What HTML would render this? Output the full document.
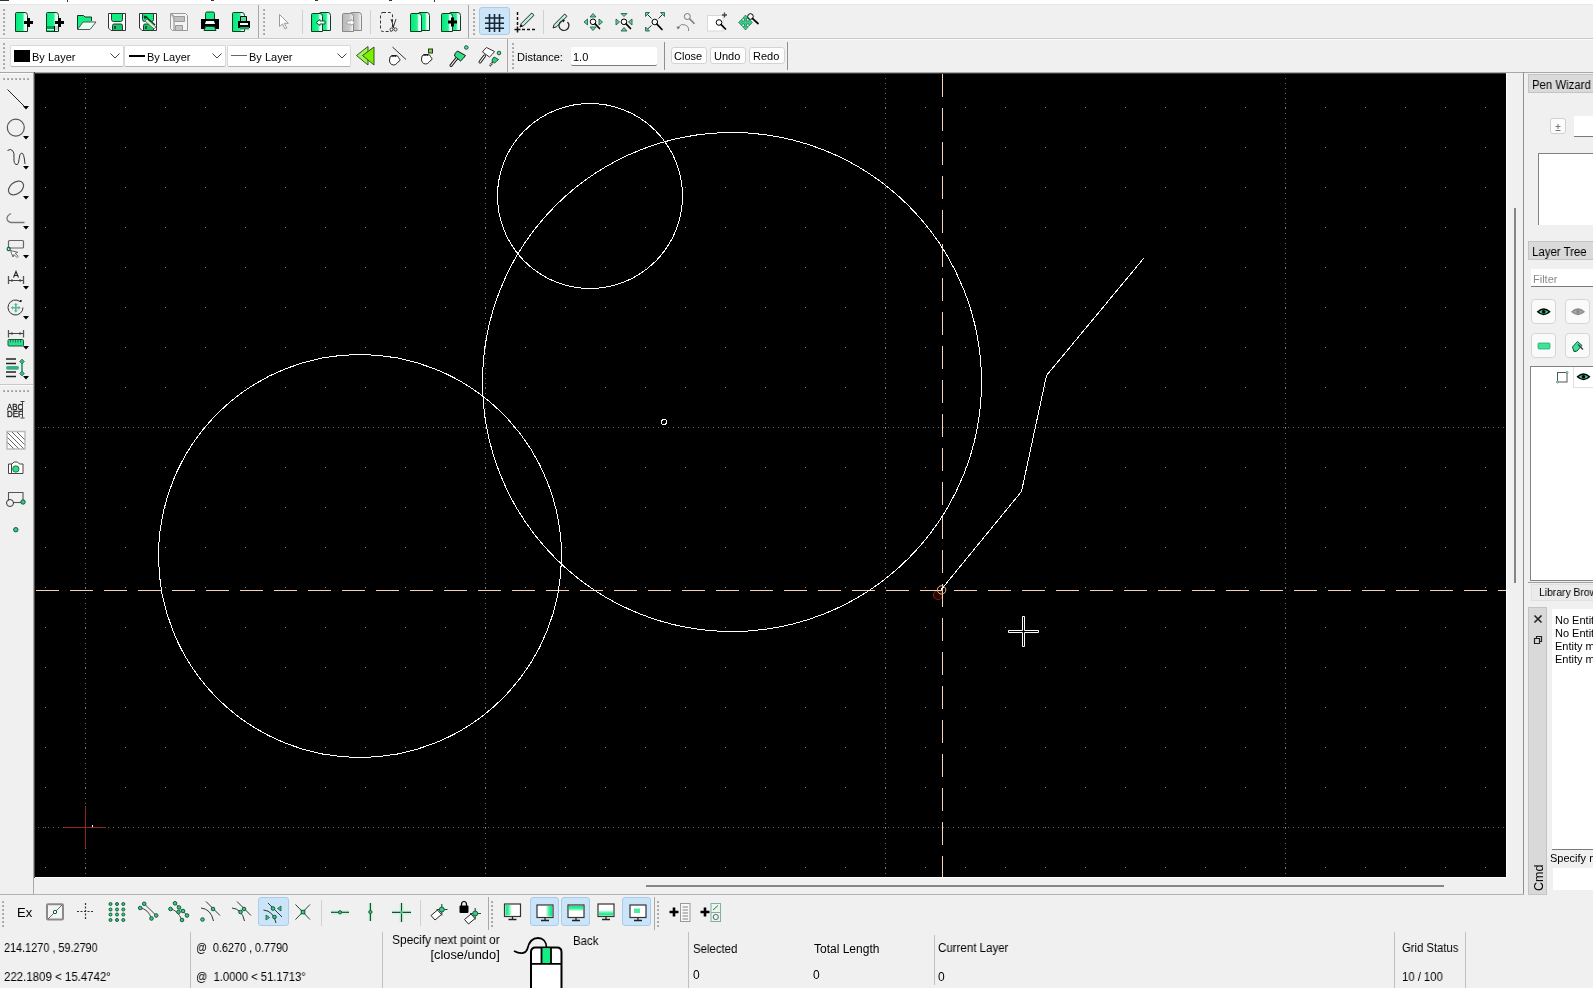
<!DOCTYPE html>
<html><head><meta charset="utf-8">
<style>
html,body{margin:0;padding:0;width:1593px;height:988px;overflow:hidden;background:#f0f0f0;font-family:"Liberation Sans",sans-serif;font-size:12px;color:#000}
.a{position:absolute}
.t{position:absolute;white-space:nowrap;-webkit-font-smoothing:antialiased;will-change:transform}
.sv{position:absolute;left:0;top:0;overflow:visible}
</style></head><body>
<div class="a" style="left:0px;top:0px;width:1593px;height:5px;background:#ffffff;"></div>
<div class="a" style="left:0px;top:4px;width:1593px;height:1px;background:#e6e6e6;"></div>
<div class="a" style="left:0px;top:0px;width:9px;height:1px;background:#333;"></div>
<div class="a" style="left:67px;top:0px;width:1px;height:2px;background:#333;"></div>
<div class="a" style="left:211px;top:0px;width:3px;height:1px;background:#333;"></div>
<div class="a" style="left:315px;top:0px;width:3px;height:1px;background:#333;"></div>
<div class="a" style="left:389px;top:0px;width:3px;height:1px;background:#333;"></div>
<div class="a" style="left:434px;top:0px;width:1px;height:2px;background:#333;"></div>
<div class="a" style="left:0px;top:38px;width:1593px;height:1px;background:#c9c9c9;"></div>
<div class="a" style="left:0px;top:39px;width:1593px;height:1px;background:#fbfbfb;"></div>
<div class="a" style="left:3px;top:9px;width:2px;height:2px;background:#b2b2b2;"></div>
<div class="a" style="left:4px;top:10px;width:1px;height:1px;background:#9a9a9a;"></div>
<div class="a" style="left:3px;top:13px;width:2px;height:2px;background:#b2b2b2;"></div>
<div class="a" style="left:4px;top:14px;width:1px;height:1px;background:#9a9a9a;"></div>
<div class="a" style="left:3px;top:17px;width:2px;height:2px;background:#b2b2b2;"></div>
<div class="a" style="left:4px;top:18px;width:1px;height:1px;background:#9a9a9a;"></div>
<div class="a" style="left:3px;top:21px;width:2px;height:2px;background:#b2b2b2;"></div>
<div class="a" style="left:4px;top:22px;width:1px;height:1px;background:#9a9a9a;"></div>
<div class="a" style="left:3px;top:25px;width:2px;height:2px;background:#b2b2b2;"></div>
<div class="a" style="left:4px;top:26px;width:1px;height:1px;background:#9a9a9a;"></div>
<div class="a" style="left:3px;top:29px;width:2px;height:2px;background:#b2b2b2;"></div>
<div class="a" style="left:4px;top:30px;width:1px;height:1px;background:#9a9a9a;"></div>
<div class="a" style="left:3px;top:33px;width:2px;height:2px;background:#b2b2b2;"></div>
<div class="a" style="left:4px;top:34px;width:1px;height:1px;background:#9a9a9a;"></div>
<div class="a" style="left:263px;top:9px;width:2px;height:2px;background:#b2b2b2;"></div>
<div class="a" style="left:264px;top:10px;width:1px;height:1px;background:#9a9a9a;"></div>
<div class="a" style="left:263px;top:13px;width:2px;height:2px;background:#b2b2b2;"></div>
<div class="a" style="left:264px;top:14px;width:1px;height:1px;background:#9a9a9a;"></div>
<div class="a" style="left:263px;top:17px;width:2px;height:2px;background:#b2b2b2;"></div>
<div class="a" style="left:264px;top:18px;width:1px;height:1px;background:#9a9a9a;"></div>
<div class="a" style="left:263px;top:21px;width:2px;height:2px;background:#b2b2b2;"></div>
<div class="a" style="left:264px;top:22px;width:1px;height:1px;background:#9a9a9a;"></div>
<div class="a" style="left:263px;top:25px;width:2px;height:2px;background:#b2b2b2;"></div>
<div class="a" style="left:264px;top:26px;width:1px;height:1px;background:#9a9a9a;"></div>
<div class="a" style="left:263px;top:29px;width:2px;height:2px;background:#b2b2b2;"></div>
<div class="a" style="left:264px;top:30px;width:1px;height:1px;background:#9a9a9a;"></div>
<div class="a" style="left:263px;top:33px;width:2px;height:2px;background:#b2b2b2;"></div>
<div class="a" style="left:264px;top:34px;width:1px;height:1px;background:#9a9a9a;"></div>
<div class="a" style="left:473px;top:9px;width:2px;height:2px;background:#b2b2b2;"></div>
<div class="a" style="left:474px;top:10px;width:1px;height:1px;background:#9a9a9a;"></div>
<div class="a" style="left:473px;top:13px;width:2px;height:2px;background:#b2b2b2;"></div>
<div class="a" style="left:474px;top:14px;width:1px;height:1px;background:#9a9a9a;"></div>
<div class="a" style="left:473px;top:17px;width:2px;height:2px;background:#b2b2b2;"></div>
<div class="a" style="left:474px;top:18px;width:1px;height:1px;background:#9a9a9a;"></div>
<div class="a" style="left:473px;top:21px;width:2px;height:2px;background:#b2b2b2;"></div>
<div class="a" style="left:474px;top:22px;width:1px;height:1px;background:#9a9a9a;"></div>
<div class="a" style="left:473px;top:25px;width:2px;height:2px;background:#b2b2b2;"></div>
<div class="a" style="left:474px;top:26px;width:1px;height:1px;background:#9a9a9a;"></div>
<div class="a" style="left:473px;top:29px;width:2px;height:2px;background:#b2b2b2;"></div>
<div class="a" style="left:474px;top:30px;width:1px;height:1px;background:#9a9a9a;"></div>
<div class="a" style="left:473px;top:33px;width:2px;height:2px;background:#b2b2b2;"></div>
<div class="a" style="left:474px;top:34px;width:1px;height:1px;background:#9a9a9a;"></div>
<div class="a" style="left:258px;top:5px;width:1px;height:33px;background:#a8a8a8;"></div>
<div class="a" style="left:468px;top:5px;width:1px;height:33px;background:#a8a8a8;"></div>
<div class="a" style="left:302px;top:10px;width:1px;height:24px;background:#d0d0d0;"></div>
<div class="a" style="left:370px;top:10px;width:1px;height:24px;background:#d0d0d0;"></div>
<div class="a" style="left:543px;top:10px;width:1px;height:24px;background:#d0d0d0;"></div>
<div class="a" style="left:479px;top:7px;width:29px;height:26px;background:#cce4f7;border:1px solid #a6cdee;border-radius:3px"></div>
<div class="a" style="left:3px;top:43px;width:2px;height:2px;background:#b2b2b2;"></div>
<div class="a" style="left:4px;top:44px;width:1px;height:1px;background:#9a9a9a;"></div>
<div class="a" style="left:3px;top:47px;width:2px;height:2px;background:#b2b2b2;"></div>
<div class="a" style="left:4px;top:48px;width:1px;height:1px;background:#9a9a9a;"></div>
<div class="a" style="left:3px;top:51px;width:2px;height:2px;background:#b2b2b2;"></div>
<div class="a" style="left:4px;top:52px;width:1px;height:1px;background:#9a9a9a;"></div>
<div class="a" style="left:3px;top:55px;width:2px;height:2px;background:#b2b2b2;"></div>
<div class="a" style="left:4px;top:56px;width:1px;height:1px;background:#9a9a9a;"></div>
<div class="a" style="left:3px;top:59px;width:2px;height:2px;background:#b2b2b2;"></div>
<div class="a" style="left:4px;top:60px;width:1px;height:1px;background:#9a9a9a;"></div>
<div class="a" style="left:3px;top:63px;width:2px;height:2px;background:#b2b2b2;"></div>
<div class="a" style="left:4px;top:64px;width:1px;height:1px;background:#9a9a9a;"></div>
<div class="a" style="left:3px;top:67px;width:2px;height:2px;background:#b2b2b2;"></div>
<div class="a" style="left:4px;top:68px;width:1px;height:1px;background:#9a9a9a;"></div>
<div class="a" style="left:512px;top:43px;width:2px;height:2px;background:#b2b2b2;"></div>
<div class="a" style="left:513px;top:44px;width:1px;height:1px;background:#9a9a9a;"></div>
<div class="a" style="left:512px;top:47px;width:2px;height:2px;background:#b2b2b2;"></div>
<div class="a" style="left:513px;top:48px;width:1px;height:1px;background:#9a9a9a;"></div>
<div class="a" style="left:512px;top:51px;width:2px;height:2px;background:#b2b2b2;"></div>
<div class="a" style="left:513px;top:52px;width:1px;height:1px;background:#9a9a9a;"></div>
<div class="a" style="left:512px;top:55px;width:2px;height:2px;background:#b2b2b2;"></div>
<div class="a" style="left:513px;top:56px;width:1px;height:1px;background:#9a9a9a;"></div>
<div class="a" style="left:512px;top:59px;width:2px;height:2px;background:#b2b2b2;"></div>
<div class="a" style="left:513px;top:60px;width:1px;height:1px;background:#9a9a9a;"></div>
<div class="a" style="left:512px;top:63px;width:2px;height:2px;background:#b2b2b2;"></div>
<div class="a" style="left:513px;top:64px;width:1px;height:1px;background:#9a9a9a;"></div>
<div class="a" style="left:512px;top:67px;width:2px;height:2px;background:#b2b2b2;"></div>
<div class="a" style="left:513px;top:68px;width:1px;height:1px;background:#9a9a9a;"></div>
<div class="a" style="left:507px;top:39px;width:1px;height:33px;background:#a8a8a8;"></div>
<div class="a" style="left:10px;top:45px;width:112px;height:20px;background:#fff;border:1px solid #d9d9d9;border-bottom-color:#b4b4b4;border-radius:2px"></div>
<div class="a" style="left:124px;top:45px;width:100px;height:20px;background:#fff;border:1px solid #d9d9d9;border-bottom-color:#b4b4b4;border-radius:2px"></div>
<div class="a" style="left:227px;top:45px;width:122px;height:20px;background:#fff;border:1px solid #d9d9d9;border-bottom-color:#b4b4b4;border-radius:2px"></div>
<svg class="a" style="left:110px;top:53px" width="10" height="6"><polyline points="0.5,0.5 5,5 9.5,0.5" fill="none" stroke="#444" stroke-width="1"/></svg>
<svg class="a" style="left:212px;top:53px" width="10" height="6"><polyline points="0.5,0.5 5,5 9.5,0.5" fill="none" stroke="#444" stroke-width="1"/></svg>
<svg class="a" style="left:337px;top:53px" width="10" height="6"><polyline points="0.5,0.5 5,5 9.5,0.5" fill="none" stroke="#444" stroke-width="1"/></svg>
<div class="a" style="left:14px;top:50px;width:16px;height:12px;background:#000;"></div>
<div class="a" style="left:129px;top:55px;width:16px;height:2px;background:#000;"></div>
<div class="a" style="left:231px;top:55px;width:16px;height:1px;background:#666;"></div>
<div class="a" style="left:571px;top:47px;width:86px;height:18px;background:#fff;border-bottom:1px solid #7a7a7a;border-radius:2px"></div>
<div class="a" style="left:664px;top:42px;width:1px;height:28px;background:#909090;"></div>
<div class="a" style="left:787px;top:42px;width:1px;height:28px;background:#909090;"></div>
<div class="a" style="left:671px;top:47px;width:34px;height:15px;background:#fdfdfd;border:1px solid #d4d4d4;border-radius:3px"></div>
<div class="a" style="left:710px;top:47px;width:34px;height:15px;background:#fdfdfd;border:1px solid #d4d4d4;border-radius:3px"></div>
<div class="a" style="left:749px;top:47px;width:34px;height:15px;background:#fdfdfd;border:1px solid #d4d4d4;border-radius:3px"></div>
<div class="a" style="left:0px;top:72px;width:1593px;height:1px;background:#a8a8a8;"></div>
<div class="a" style="left:0px;top:73px;width:33px;height:1px;background:#fbfbfb;"></div>
<div class="a" style="left:33px;top:72px;width:1px;height:822px;background:#a8a8a8;"></div>
<div class="a" style="left:34px;top:72px;width:1px;height:806px;background:#4a4a4a;"></div>
<div class="a" style="left:0px;top:894px;width:1524px;height:1px;background:#b4b4b4;"></div>
<div class="a" style="left:1523px;top:72px;width:1px;height:822px;background:#a0a0a0;"></div>
<div class="a" style="left:35px;top:877px;width:1472px;height:1px;background:#ffffff;"></div>
<div class="a" style="left:1506px;top:73px;width:1px;height:805px;background:#ffffff;"></div>
<div class="a" style="left:3px;top:78px;width:2px;height:2px;background:#b2b2b2;"></div>
<div class="a" style="left:4px;top:79px;width:1px;height:1px;background:#9a9a9a;"></div>
<div class="a" style="left:7px;top:78px;width:2px;height:2px;background:#b2b2b2;"></div>
<div class="a" style="left:8px;top:79px;width:1px;height:1px;background:#9a9a9a;"></div>
<div class="a" style="left:11px;top:78px;width:2px;height:2px;background:#b2b2b2;"></div>
<div class="a" style="left:12px;top:79px;width:1px;height:1px;background:#9a9a9a;"></div>
<div class="a" style="left:15px;top:78px;width:2px;height:2px;background:#b2b2b2;"></div>
<div class="a" style="left:16px;top:79px;width:1px;height:1px;background:#9a9a9a;"></div>
<div class="a" style="left:19px;top:78px;width:2px;height:2px;background:#b2b2b2;"></div>
<div class="a" style="left:20px;top:79px;width:1px;height:1px;background:#9a9a9a;"></div>
<div class="a" style="left:23px;top:78px;width:2px;height:2px;background:#b2b2b2;"></div>
<div class="a" style="left:24px;top:79px;width:1px;height:1px;background:#9a9a9a;"></div>
<div class="a" style="left:27px;top:78px;width:2px;height:2px;background:#b2b2b2;"></div>
<div class="a" style="left:28px;top:79px;width:1px;height:1px;background:#9a9a9a;"></div>
<div class="a" style="left:0px;top:384px;width:33px;height:1px;background:#c8c8c8;"></div>
<div class="a" style="left:0px;top:385px;width:33px;height:1px;background:#fafafa;"></div>
<div class="a" style="left:3px;top:390px;width:2px;height:2px;background:#b2b2b2;"></div>
<div class="a" style="left:4px;top:391px;width:1px;height:1px;background:#9a9a9a;"></div>
<div class="a" style="left:7px;top:390px;width:2px;height:2px;background:#b2b2b2;"></div>
<div class="a" style="left:8px;top:391px;width:1px;height:1px;background:#9a9a9a;"></div>
<div class="a" style="left:11px;top:390px;width:2px;height:2px;background:#b2b2b2;"></div>
<div class="a" style="left:12px;top:391px;width:1px;height:1px;background:#9a9a9a;"></div>
<div class="a" style="left:15px;top:390px;width:2px;height:2px;background:#b2b2b2;"></div>
<div class="a" style="left:16px;top:391px;width:1px;height:1px;background:#9a9a9a;"></div>
<div class="a" style="left:19px;top:390px;width:2px;height:2px;background:#b2b2b2;"></div>
<div class="a" style="left:20px;top:391px;width:1px;height:1px;background:#9a9a9a;"></div>
<div class="a" style="left:23px;top:390px;width:2px;height:2px;background:#b2b2b2;"></div>
<div class="a" style="left:24px;top:391px;width:1px;height:1px;background:#9a9a9a;"></div>
<div class="a" style="left:27px;top:390px;width:2px;height:2px;background:#b2b2b2;"></div>
<div class="a" style="left:28px;top:391px;width:1px;height:1px;background:#9a9a9a;"></div>
<div class="a" style="left:646px;top:885px;width:798px;height:2px;background:#868686;"></div>
<div class="a" style="left:1514px;top:208px;width:2px;height:375px;background:#868686;"></div>
<div class="a" style="left:2px;top:901px;width:2px;height:2px;background:#b2b2b2;"></div>
<div class="a" style="left:3px;top:902px;width:1px;height:1px;background:#9a9a9a;"></div>
<div class="a" style="left:2px;top:905px;width:2px;height:2px;background:#b2b2b2;"></div>
<div class="a" style="left:3px;top:906px;width:1px;height:1px;background:#9a9a9a;"></div>
<div class="a" style="left:2px;top:909px;width:2px;height:2px;background:#b2b2b2;"></div>
<div class="a" style="left:3px;top:910px;width:1px;height:1px;background:#9a9a9a;"></div>
<div class="a" style="left:2px;top:913px;width:2px;height:2px;background:#b2b2b2;"></div>
<div class="a" style="left:3px;top:914px;width:1px;height:1px;background:#9a9a9a;"></div>
<div class="a" style="left:2px;top:917px;width:2px;height:2px;background:#b2b2b2;"></div>
<div class="a" style="left:3px;top:918px;width:1px;height:1px;background:#9a9a9a;"></div>
<div class="a" style="left:2px;top:921px;width:2px;height:2px;background:#b2b2b2;"></div>
<div class="a" style="left:3px;top:922px;width:1px;height:1px;background:#9a9a9a;"></div>
<div class="a" style="left:2px;top:925px;width:2px;height:2px;background:#b2b2b2;"></div>
<div class="a" style="left:3px;top:926px;width:1px;height:1px;background:#9a9a9a;"></div>
<div class="a" style="left:488px;top:897px;width:1px;height:33px;background:#a8a8a8;"></div>
<div class="a" style="left:491px;top:901px;width:2px;height:2px;background:#b2b2b2;"></div>
<div class="a" style="left:492px;top:902px;width:1px;height:1px;background:#9a9a9a;"></div>
<div class="a" style="left:491px;top:905px;width:2px;height:2px;background:#b2b2b2;"></div>
<div class="a" style="left:492px;top:906px;width:1px;height:1px;background:#9a9a9a;"></div>
<div class="a" style="left:491px;top:909px;width:2px;height:2px;background:#b2b2b2;"></div>
<div class="a" style="left:492px;top:910px;width:1px;height:1px;background:#9a9a9a;"></div>
<div class="a" style="left:491px;top:913px;width:2px;height:2px;background:#b2b2b2;"></div>
<div class="a" style="left:492px;top:914px;width:1px;height:1px;background:#9a9a9a;"></div>
<div class="a" style="left:491px;top:917px;width:2px;height:2px;background:#b2b2b2;"></div>
<div class="a" style="left:492px;top:918px;width:1px;height:1px;background:#9a9a9a;"></div>
<div class="a" style="left:491px;top:921px;width:2px;height:2px;background:#b2b2b2;"></div>
<div class="a" style="left:492px;top:922px;width:1px;height:1px;background:#9a9a9a;"></div>
<div class="a" style="left:491px;top:925px;width:2px;height:2px;background:#b2b2b2;"></div>
<div class="a" style="left:492px;top:926px;width:1px;height:1px;background:#9a9a9a;"></div>
<div class="a" style="left:654px;top:897px;width:1px;height:33px;background:#a8a8a8;"></div>
<div class="a" style="left:657px;top:901px;width:2px;height:2px;background:#b2b2b2;"></div>
<div class="a" style="left:658px;top:902px;width:1px;height:1px;background:#9a9a9a;"></div>
<div class="a" style="left:657px;top:905px;width:2px;height:2px;background:#b2b2b2;"></div>
<div class="a" style="left:658px;top:906px;width:1px;height:1px;background:#9a9a9a;"></div>
<div class="a" style="left:657px;top:909px;width:2px;height:2px;background:#b2b2b2;"></div>
<div class="a" style="left:658px;top:910px;width:1px;height:1px;background:#9a9a9a;"></div>
<div class="a" style="left:657px;top:913px;width:2px;height:2px;background:#b2b2b2;"></div>
<div class="a" style="left:658px;top:914px;width:1px;height:1px;background:#9a9a9a;"></div>
<div class="a" style="left:657px;top:917px;width:2px;height:2px;background:#b2b2b2;"></div>
<div class="a" style="left:658px;top:918px;width:1px;height:1px;background:#9a9a9a;"></div>
<div class="a" style="left:657px;top:921px;width:2px;height:2px;background:#b2b2b2;"></div>
<div class="a" style="left:658px;top:922px;width:1px;height:1px;background:#9a9a9a;"></div>
<div class="a" style="left:657px;top:925px;width:2px;height:2px;background:#b2b2b2;"></div>
<div class="a" style="left:658px;top:926px;width:1px;height:1px;background:#9a9a9a;"></div>
<div class="a" style="left:321px;top:900px;width:1px;height:26px;background:#d0d0d0;"></div>
<div class="a" style="left:420px;top:900px;width:1px;height:26px;background:#d0d0d0;"></div>
<div class="a" style="left:258px;top:897px;width:29px;height:27px;background:#cce4f7;border:1px solid #a6cdee;border-radius:3px"></div>
<div class="a" style="left:530px;top:897px;width:27px;height:27px;background:#cce4f7;border:1px solid #a6cdee;border-radius:3px"></div>
<div class="a" style="left:561px;top:897px;width:27px;height:27px;background:#cce4f7;border:1px solid #a6cdee;border-radius:3px"></div>
<div class="a" style="left:622px;top:897px;width:27px;height:27px;background:#cce4f7;border:1px solid #a6cdee;border-radius:3px"></div>
<div class="a" style="left:190px;top:932px;width:1px;height:56px;background:#c0c0c0;"></div>
<div class="a" style="left:382px;top:932px;width:1px;height:56px;background:#c0c0c0;"></div>
<div class="a" style="left:688px;top:932px;width:1px;height:56px;background:#c0c0c0;"></div>
<div class="a" style="left:934px;top:935px;width:1px;height:50px;background:#c0c0c0;"></div>
<div class="a" style="left:1394px;top:932px;width:1px;height:56px;background:#c0c0c0;"></div>
<div class="a" style="left:1465px;top:932px;width:1px;height:56px;background:#c0c0c0;"></div>
<div class="a" style="left:1528px;top:74px;width:70px;height:17px;background:#dadada;border:1px solid #c4c4c4"></div>
<div class="a" style="left:1550px;top:118px;width:14px;height:14px;background:#fdfdfd;border:1px solid #d0d0d0;border-radius:3px"></div>
<svg class="a" style="left:1550px;top:118px" width="16" height="16"><path d="M5.5 8.5h5M8 6v5M5.5 12.5h5" stroke="#777" stroke-width="1" fill="none"/></svg>
<div class="a" style="left:1574px;top:116px;width:30px;height:20px;background:#fff;border-bottom:1px solid #7a7a7a"></div>
<div class="a" style="left:1538px;top:153px;width:60px;height:71px;background:#fff;border-left:1px solid #828282;border-top:1px solid #828282"></div>
<div class="a" style="left:1528px;top:241px;width:70px;height:17px;background:#dadada;border:1px solid #c4c4c4"></div>
<div class="a" style="left:1531px;top:269px;width:70px;height:17px;background:#fff;border-bottom:1px solid #7a7a7a"></div>
<div class="a" style="left:1531px;top:299px;width:23px;height:23px;background:#fafafa;border:1px solid #d6d6d6;border-radius:4px"></div>
<div class="a" style="left:1565px;top:299px;width:23px;height:23px;background:#fafafa;border:1px solid #d6d6d6;border-radius:4px"></div>
<div class="a" style="left:1531px;top:333px;width:23px;height:23px;background:#fafafa;border:1px solid #d6d6d6;border-radius:4px"></div>
<div class="a" style="left:1565px;top:333px;width:23px;height:23px;background:#fafafa;border:1px solid #d6d6d6;border-radius:4px"></div>
<div class="a" style="left:1530px;top:366px;width:70px;height:213px;background:#fff;border:1px solid #828282"></div>
<div class="a" style="left:1573px;top:367px;width:30px;height:20px;background:#fff;border-left:1px solid #e0e0e0;border-bottom:1px solid #e0e0e0"></div>
<div class="a" style="left:1528px;top:582px;width:70px;height:1px;background:#a0a0a0;"></div>
<div class="a" style="left:1531px;top:584px;width:70px;height:15px;background:#ebebeb;border:1px solid #e0e0e0"></div>
<div class="a" style="left:1528px;top:607px;width:17px;height:286px;background:#d9d9d9;border:1px solid #c4c4c4"></div>
<svg class="a" style="left:1530px;top:612px" width="16" height="34"><path d="M4.5 3.5l7 7M11.5 3.5l-7 7" stroke="#222" stroke-width="1.6" fill="none"/><path d="M4.5 26.5h5v5h-5zM6.5 26.5v-2h5v5h-2" stroke="#222" stroke-width="1.2" fill="none"/></svg>
<div class="t" style="left:1525.5px;top:871.5px;font-size:12.5px;line-height:12px;transform:rotate(-90deg);transform-origin:center;width:26px;text-align:center">Cmd</div>
<div class="a" style="left:1552px;top:609px;width:50px;height:240px;background:#fff;border-bottom:1px solid #7a7a7a"></div>
<div class="a" style="left:1553px;top:868px;width:50px;height:22px;background:#fff"></div>
<div class="a" style="left:1523px;top:72px;width:1px;height:822px;background:#909090;"></div>
<svg class="sv" width="1593" height="988" viewBox="0 0 1593 988" shape-rendering="crispEdges">
<defs>
<pattern id="gd" x="45" y="107" width="40" height="40" patternUnits="userSpaceOnUse"><rect width="1" height="1" fill="#808080"/></pattern>
<pattern id="vd" x="85" y="73" width="1" height="5" patternUnits="userSpaceOnUse"><rect y="0" width="1" height="1" fill="#6a6a6a"/></pattern>
<pattern id="hd" x="38" y="427" width="5" height="1" patternUnits="userSpaceOnUse"><rect width="1" height="1" fill="#6a6a6a"/></pattern>
<clipPath id="cv"><rect x="35" y="73" width="1471" height="804"/></clipPath>
</defs>
<rect x="35" y="73" width="1471" height="804" fill="#000"/>
<g clip-path="url(#cv)">
<rect x="35" y="73" width="1471" height="804" fill="url(#gd)"/>
<rect x="85" y="73" width="1" height="804" fill="url(#vd)"/>
<rect x="485" y="73" width="1" height="804" fill="url(#vd)"/>
<rect x="885" y="73" width="1" height="804" fill="url(#vd)"/>
<rect x="1285" y="73" width="1" height="804" fill="url(#vd)"/>
<rect x="35" y="427" width="1471" height="1" fill="url(#hd)"/>
<rect x="35" y="827" width="1471" height="1" fill="url(#hd)"/>
<circle cx="938" cy="595" r="4.5" fill="#2a0400" stroke="#70201a" stroke-width="1.2" shape-rendering="auto"/>
<line x1="35" y1="590.5" x2="1506" y2="590.5" stroke="#f2d2b8" stroke-width="1" stroke-dasharray="23 11" stroke-dashoffset="-1"/>
<line x1="942.5" y1="73" x2="942.5" y2="877" stroke="#f2d2b8" stroke-width="1" stroke-dasharray="23 11" stroke-dashoffset="-1"/>
<line x1="64" y1="827.5" x2="106" y2="827.5" stroke="#8c2626" stroke-width="1"/><rect x="92" y="825" width="1" height="2" fill="#fff"/>
<line x1="85.5" y1="806" x2="85.5" y2="848" stroke="#8c2626" stroke-width="1"/>
<g fill="none" stroke="#fff" stroke-width="1">
<circle cx="590" cy="196" r="92.5"/>
<circle cx="732" cy="382" r="249.5"/>
<circle cx="360" cy="556" r="201.5"/>
<circle cx="664" cy="422" r="2.5"/>
<polyline points="940.5,590.5 1021.5,491.5 1046.5,375.5 1143.5,258.5"/>
</g>
<circle cx="941.6" cy="589.9" r="4.2" fill="none" stroke="#f2bc80" stroke-width="1" shape-rendering="auto"/>
<path d="M1022.5 616.5h2v14h14v2h-14v14h-2v-14h-14v-2h14z" fill="#000" stroke="#fff" stroke-width="1" shape-rendering="auto"/>
</g>
<rect id="frtop" x="34" y="73" width="1472" height="1" fill="#3a3a3a"/>
</svg>
<svg class="sv" width="1593" height="988" viewBox="0 0 1593 988">
<defs><linearGradient id="gdoc" x1="0" x2="1" y1="0" y2="0"><stop offset="0" stop-color="#00ec7a"/><stop offset="0.6" stop-color="#20f090"/><stop offset="0.75" stop-color="#d8fff0"/><stop offset="1" stop-color="#ffffff"/></linearGradient><linearGradient id="ggrey" x1="0" x2="1"><stop offset="0" stop-color="#b8b8b8"/><stop offset="0.6" stop-color="#c8c8c8"/><stop offset="1" stop-color="#f8f8f8"/></linearGradient></defs>
<path d="M15.5 31.5V13.5q0-1 1-1H25q2.5 0 2.5 3V31.5z" fill="url(#gdoc)" stroke="#0b3d22" stroke-width="1"/>
<path d="M24 21h9v3h-9zM27 18h3v9h-3z" fill="#000"/>
<path d="M46.5 31.5V13.5q0-1 1-1H56q2.5 0 2.5 3V31.5z" fill="url(#gdoc)" stroke="#0b3d22" stroke-width="1"/>
<path d="M47 26h8v3h-8z" fill="#0aa050"/><path d="M47 29.5h11" stroke="#bff" stroke-width="1"/><path d="M54.5 26v5.5" stroke="#000" stroke-width="1"/><path d="M55 26h3v4h-3z" fill="#ccc"/>
<path d="M55 21h9v3h-9zM58 18h3v9h-3z" fill="#000"/>
<path d="M77.5 29.5V15.5h6l1.5 1.5h6.5v4" fill="#14ee84" stroke="#0b3d22" stroke-width="1"/><path d="M77.5 29.5l5-8h8l-3 8z" fill="#14ee84" stroke="none"/><path d="M77.5 29.5l5.5-7.5h13l-6 7.5z" fill="#e8fff4" stroke="#555" stroke-width="1"/>
<path d="M108.5 13.5h17v17h-14.5l-2.5-2.5z" fill="#fff" stroke="#333" stroke-width="1"/><path d="M111.5 13.5v6q0 2 2 2h7q2 0 2-2v-6z" fill="#10ee80" stroke="#333" stroke-width="1"/><path d="M112.5 30.5v-5q0-1.5 1.5-1.5h7q1.5 0 1.5 1.5v5z" fill="#18c870" stroke="#333" stroke-width="1"/><rect x="114" y="26" width="2" height="3" fill="#085a30"/>
<path d="M139.5 13.5h17v17h-14.5l-2.5-2.5z" fill="#fff" stroke="#333" stroke-width="1"/><path d="M142.5 13.5v6q0 2 2 2h7q2 0 2-2v-6z" fill="#10ee80" stroke="#333" stroke-width="1"/><path d="M143.5 30.5v-5q0-1.5 1.5-1.5h7q1.5 0 1.5 1.5v5z" fill="#18c870" stroke="#333" stroke-width="1"/><rect x="145" y="26" width="2" height="3" fill="#085a30"/>
<path d="M145 16l10 9" stroke="#0b3d22" stroke-width="1.6"/><path d="M147 19l9 8 -2 2 -9-8z" fill="#cfc" stroke="#555" stroke-width=".8"/><path d="M143.5 15.5l4 1-3 3z" fill="#0b3d22"/>
<path d="M170.5 13.5h15l2 2v15h-15l-2-2z" fill="#f4f4f4" stroke="#999" stroke-width="1"/><path d="M172.5 14.5l2 2h10v5h-10z" fill="#c0c0c0" stroke="#999" stroke-width="1"/><path d="M171 14l3 3v13" stroke="#aaa" stroke-width="1.5" fill="none"/><path d="M175.5 30.5v-5h7v5z" fill="#c4c4c4" stroke="#999" stroke-width="1"/>
<path d="M205.5 19.5v-6q0-1.5 1.5-1.5h6q1.5 0 1.5 1.5v6z" fill="#14ee84" stroke="#0b3d22" stroke-width="1"/><path d="M201 19h18v10h-18z" fill="#000"/><path d="M206 21h8l1 3h-10z" fill="#efffff"/><path d="M204 30.5l1.5-4h9l1.5 4z" fill="#30e090" stroke="#0b3d22" stroke-width="1"/>
<path d="M232.5 31.5V13.5q0-1 1-1H242q2.5 0 2.5 3V31.5z" fill="url(#gdoc)" stroke="#0b3d22" stroke-width="1"/>
<path d="M238 21h12v7h-12z" fill="#000"/><path d="M240.5 21v-4.5h6v4.5" fill="#40e898" stroke="#000" stroke-width="1"/><path d="M240 23h8v2h-8z" fill="#efffff"/><path d="M240 27h9v2.5h-9z" fill="#20a060"/><path d="M279.5 14.5v12l3-2.5 2.5 5 1.8-.9-2.5-4.8h4z" fill="#fff" stroke="#9a9a9a" stroke-width="1"/>
<path d="M319.5 30.5V13.5q0-1 1-1H328q2.5 0 2.5 3V30.5z" fill="url(#gdoc)" stroke="#0b3d22" stroke-width="1"/>
<path d="M311.5 31.5V14.5q0-1 1-1H320q2.5 0 2.5 3V31.5z" fill="url(#gdoc)" stroke="#0b3d22" stroke-width="1"/>
<path d="M316 22.5l4-3v1.5h5v3h-5v1.5z" fill="#e8fff8" stroke="#0b5a30" stroke-width="1"/>
<path d="M350.5 30.5V13.5q0-1 1-1H359q2.5 0 2.5 3V30.5z" fill="url(#ggrey)" stroke="#888" stroke-width="1"/>
<path d="M342.5 31.5V14.5q0-1 1-1H351q2.5 0 2.5 3V31.5z" fill="url(#ggrey)" stroke="#888" stroke-width="1"/>
<path d="M355 22.5l-4-3v1.5h-4v3h4v1.5z" fill="#fff" stroke="#999" stroke-width=".8"/>
<rect x="380.5" y="12.5" width="12" height="19" rx="2.5" fill="none" stroke="#333" stroke-width="1" stroke-dasharray="3 2"/><path d="M391 19l3 9M396 19l-3 9" stroke="#222" stroke-width=".9"/><circle cx="391.5" cy="29.5" r="1.5" fill="#fff" stroke="#222" stroke-width=".9"/><circle cx="395.5" cy="29.5" r="1.5" fill="#fff" stroke="#222" stroke-width=".9"/>
<path d="M418.5 30.5V13.5q0-1 1-1H427q2.5 0 2.5 3V30.5z" fill="url(#gdoc)" stroke="#0b3d22" stroke-width="1"/>
<path d="M410.5 31.5V14.5q0-1 1-1H419q2.5 0 2.5 3V31.5z" fill="url(#gdoc)" stroke="#0b3d22" stroke-width="1"/>
<path d="M449.5 30.5V13.5q0-1 1-1H458q2.5 0 2.5 3V30.5z" fill="url(#gdoc)" stroke="#0b3d22" stroke-width="1"/>
<path d="M441.5 31.5V14.5q0-1 1-1H450q2.5 0 2.5 3V31.5z" fill="url(#gdoc)" stroke="#0b3d22" stroke-width="1"/>
<path d="M448 20.5h9v3h-9zM451 17.5h3v9h-3z" fill="#000"/>
<g stroke="#13283a" stroke-width="1.6"><path d="M489.5 14v18M494.5 14v18M499.5 14v18M485 18h19M485 23.3h19M485 28.3h19"/></g>
<path d="M517.5 12v13" stroke="#111" stroke-width="1.5" stroke-dasharray="3 2"/><path d="M514.5 29.5h6M517.5 26.5v6" stroke="#111" stroke-width="1.5"/><path d="M522 29.5h14" stroke="#111" stroke-width="1.5" stroke-dasharray="3 2"/><path d="M520 27l1.2-3.5 10.5-10.5 2.3 2.3-10.5 10.5z" fill="#b8f0d8" stroke="#222" stroke-width="1"/><path d="M520 27l1.3-2.5 1.2 1.2z" fill="#000"/>
<path d="M553 28l1.2-3.5 10.5-10.5 2.3 2.3-10.5 10.5z" fill="#b8f0d8" stroke="#222" stroke-width="1"/><path d="M563.5 20.5a5 5 0 1 0 4 1.5" fill="none" stroke="#222" stroke-width="1.2"/><path d="M562 19.5l3 0.5-1.5 2.5z" fill="#111"/>
<path d="M593 13.5l3 3.5h-6z" fill="#78c8a2" stroke="#1a6a48" stroke-width=".9"/><path d="M593 30.5l3-3.5h-6z" fill="#78c8a2" stroke="#1a6a48" stroke-width=".9"/><path d="M584 22l3.5-3v6z" fill="#78c8a2" stroke="#1a6a48" stroke-width=".9"/><path d="M602.5 22l-3.5-3v6z" fill="#78c8a2" stroke="#1a6a48" stroke-width=".9"/>
<circle cx="593" cy="21.8" r="2.8" fill="#fff" fill-opacity=".6" stroke="#000" stroke-width="1"/><path d="M595.1 23.9L599.5 28.5" stroke="#000" stroke-width="1.7" stroke-linecap="round"/>
<path d="M624 16.5l3-3h-6z" fill="#78c8a2" stroke="#1a6a48" stroke-width=".9"/><path d="M624 27.5l3 3.5h-6z" fill="#78c8a2" stroke="#1a6a48" stroke-width=".9"/><path d="M619.5 22l-3.5-3v6z" fill="#78c8a2" stroke="#1a6a48" stroke-width=".9"/><path d="M628.5 22l3.5-3v6z" fill="#78c8a2" stroke="#1a6a48" stroke-width=".9"/>
<circle cx="624" cy="21.8" r="2.8" fill="#fff" fill-opacity=".6" stroke="#000" stroke-width="1"/><path d="M626.1 23.9L630.5 28.5" stroke="#000" stroke-width="1.7" stroke-linecap="round"/>
<path d="M647 14l4.5 4.5M663 14l-4.5 4.5M647 29.5l4.5-4" stroke="#0e3a28" stroke-width="1"/>
<path d="M645.5 12.5h4l-4 4z" fill="#78c8a2" stroke="#1a6a48" stroke-width=".9"/><path d="M664.5 12.5h-4l4 4z" fill="#78c8a2" stroke="#1a6a48" stroke-width=".9"/><path d="M645.5 31h4l-4-4z" fill="#78c8a2" stroke="#1a6a48" stroke-width=".9"/>
<circle cx="654.8" cy="22" r="2.8" fill="#fff" fill-opacity=".6" stroke="#000" stroke-width="1"/><path d="M656.9 24.1L662 29.5" stroke="#000" stroke-width="1.7" stroke-linecap="round"/>
<circle cx="687.3" cy="16.5" r="3" fill="none" stroke="#777" stroke-width="1"/><path d="M689.5 18.7l5 5" stroke="#777" stroke-width="1.6"/><path d="M678.5 27a5.5 5.5 0 0 1 10 4" fill="none" stroke="#888" stroke-width="1"/><path d="M676.5 26.5l3.5.5-2 2.5z" fill="#666"/>
<rect x="707.5" y="15.5" width="15.5" height="15.5" fill="#fff" stroke="#d8d8d8" stroke-width="1"/><path d="M724.5 12.5v5M722 15h5" stroke="#444" stroke-width="1.3"/>
<circle cx="719" cy="22.5" r="2.8" fill="#fff" fill-opacity=".6" stroke="#000" stroke-width="1"/><path d="M721.1 24.6L725.5 29" stroke="#000" stroke-width="1.7" stroke-linecap="round"/>
<path d="M745.5 15l3 3.5h-2v2.5h2.5v-2l3.5 3.5-3.5 3.5v-2h-2.5v2.5h2l-3 3.5-3-3.5h2v-2.5h-2.5v2l-3.5-3.5 3.5-3.5v2h2.5v-2.5h-2z" fill="#40c888" stroke="#1a8a58" stroke-width=".8"/>
<circle cx="750.5" cy="16.5" r="2.8" fill="#fff" fill-opacity=".6" stroke="#000" stroke-width="1"/><path d="M752.6 18.6L758 23.5" stroke="#000" stroke-width="1.7" stroke-linecap="round"/><path d="M356.5 55.5l11.5-9v18.5z" fill="#a8f060" stroke="#2a5a10" stroke-width="1"/><path d="M362.5 55.5l11.5-8.5v18z" fill="#7cf000" stroke="#2a5a10" stroke-width="1"/>
<path d="M389.5 60.0q0-4 2.5-4.5h4.5q1.5.3 2 2l1.5 2.2q.4.9-.9 1.3l-2 2.2q-1.6 1.8-3.4 1.8q-4.2-.3-4.2-5z" fill="#fff" stroke="#222" stroke-width="1"/><path d="M391.5 56.3h5" stroke="#111" stroke-width="1.6" stroke-dasharray="1.2 .6"/>
<path d="M392.5 47l13.5 12.5" stroke="#333" stroke-width="1"/>
<path d="M421.5 59.0q0-4 2.5-4.5h4.5q1.5.3 2 2l1.5 2.2q.4.9-.9 1.3l-2 2.2q-1.6 1.8-3.4 1.8q-4.2-.3-4.2-5z" fill="#fff" stroke="#222" stroke-width="1"/><path d="M423.5 55.3h5" stroke="#111" stroke-width="1.6" stroke-dasharray="1.2 .6"/>
<rect x="428.5" y="49" width="4" height="4" fill="#88c848" stroke="#203a10" stroke-width="1"/>
<path d="M451 65.5l6-7.5" stroke="#111" stroke-width="3" stroke-linecap="round"/><path d="M451 65.5l6-7.5" stroke="#fff" stroke-width="1.2" stroke-linecap="round"/><path d="M454.5 56q0-3 3-5l8 4.5q-2 3-5 5.5z" fill="#30e088" stroke="#111" stroke-width="1"/><circle cx="466.3" cy="47.5" r="1.8" fill="#60d8a0" stroke="#0e5a38" stroke-width="1"/>
<path d="M480 62l4.5-6" stroke="#222" stroke-width="3" stroke-linecap="round"/><path d="M480 62l4.5-6" stroke="#fff" stroke-width="1.2" stroke-linecap="round"/><path d="M482.5 52q1-2 4-4.5l8 4q-2 3-5 5.5z" fill="#fff" stroke="#333" stroke-width="1"/><path d="M490 66l3-4.5" stroke="#333" stroke-width="2.4" stroke-dasharray="1 .8"/><path d="M492 61q0-2 2-4l4.5 2.5q-2 2-4 3.5z" fill="#30d080" stroke="#0e5a38" stroke-width="1"/><circle cx="499" cy="53" r="1.8" fill="#60d8a0" stroke="#0e5a38" stroke-width="1"/><path d="M7.5 89.5l16.5 16.5" stroke="#222" stroke-width="1"/><path d="M23 106h6l-3 3.5z" fill="#000"/>
<circle cx="15.8" cy="127.6" r="8.5" fill="none" stroke="#555" stroke-width="1.2"/><path d="M23 136h6l-3 3.5z" fill="#000"/>
<path d="M7.5 150.5q3-2 5 0q2 2 1.5 7q-.5 6 2 7q2.5 1 3-5q.5-6 2.5-6.5q2.5-.5 3.5 11" fill="none" stroke="#333" stroke-width="1"/><path d="M23 166h6l-3 3.5z" fill="#000"/>
<ellipse cx="16" cy="188" rx="8.5" ry="5.8" transform="rotate(-38 16 188)" fill="none" stroke="#555" stroke-width="1.2"/><path d="M23 196h6l-3 3.5z" fill="#000"/>
<path d="M11 213.5q-4 2-4 5t4 4h13.5" fill="none" stroke="#777" stroke-width="1.3"/><path d="M23 226h6l-3 3.5z" fill="#000"/>
<rect x="8.5" y="240.5" width="15" height="7.5" rx="1" fill="none" stroke="#666" stroke-width="1.2"/><circle cx="8.7" cy="249" r="1.6" fill="none" stroke="#0e6a40" stroke-width="1.2"/><path d="M10.5 250.5l2.5 6.5 1-2.5 3 3 1.2-1.2-3-3 2.5-1z" fill="#fff" stroke="#555" stroke-width=".9"/><path d="M23 255h6l-3 3.5z" fill="#000"/>
<path d="M8.5 276v8M23.5 276v8" stroke="#555" stroke-width="1.3"/><path d="M9 280.5h14" stroke="#444" stroke-width="1"/><path d="M9.5 280.5l3-1.5v3zM22.5 280.5l-3-1.5v3z" fill="#444"/><path d="M13.5 277.5l2.5-6 2.5 6M14.5 275.5h3" fill="none" stroke="#222" stroke-width="1.1"/><path d="M23 286h6l-3 3.5z" fill="#000"/>
<path d="M20 301.5a7.5 7.5 0 1 0 3 6" fill="none" stroke="#333" stroke-width="1"/><circle cx="20.8" cy="301" r="1" fill="#000"/><path d="M15.8 303l2 2h-1.2v2h2v-1.2l2 2-2 2v-1.2h-2v2h1.2l-2 2-2-2h1.2v-2h-2v1.2l-2-2 2-2v1.2h2v-2h-1.2z" fill="#5bb890"/><path d="M23 316h6l-3 3.5z" fill="#000"/>
<path d="M8.5 330v7.5M23.5 330v7.5" stroke="#555" stroke-width="1.3"/><path d="M9 333.5h14" stroke="#444" stroke-width="1"/><path d="M9.5 333.5l3-1.5v3zM22.5 333.5l-3-1.5v3z" fill="#444"/><rect x="8" y="339.5" width="15.5" height="6.5" rx="1" fill="#30e090" stroke="#0e5a38" stroke-width="1"/><path d="M10.5 340v2.5M13 340v2.5M15.5 340v2.5M18 340v2.5M20.5 340v2.5" stroke="#0e5a38" stroke-width=".7"/><path d="M23 346h6l-3 3.5z" fill="#000"/>
<path d="M6 359h10M6 363.5h10M6 372h10M6 376.5h10" stroke="#222" stroke-width="1.4"/><rect x="6" y="366" width="13" height="3.8" rx="1.8" fill="#3cae80"/><path d="M22 361v13" stroke="#3cae80" stroke-width="2"/><path d="M22 359l2.5 2.5-2.5 2.5-2.5-2.5zM22 371l2.5 2.5-2.5 2.5-2.5-2.5z" fill="#3cae80" stroke="#1a6a48" stroke-width=".6"/><path d="M23 376h6l-3 3.5z" fill="#000"/>
<g transform="translate(7 409.8) scale(.82 1)"><text x="0" y="0" font-family="Liberation Sans" font-size="9.6" fill="#222" stroke="#222" stroke-width=".35">ABC</text><text x="0" y="7.6" font-family="Liberation Sans" font-size="9.6" fill="#222" stroke="#222" stroke-width=".35">DEF</text></g><path d="M20.5 401.5h4M22.5 401.5v16M20.5 418h4" stroke="#444" stroke-width="1"/>
<rect x="7" y="431.5" width="18" height="17.5" fill="#fff" stroke="#bbb" stroke-width="1.5"/><clipPath id="hc"><rect x="7.5" y="432" width="17" height="16.5"/></clipPath><g clip-path="url(#hc)" stroke="#555" stroke-width=".9"><path d="M2 432l17 17M7 432l17 17M12 432l17 17M17 432l17 17M-3 432l17 17"/></g>
<path d="M8.5 473.5v-9.5h3.5l2-2h3.5l2 2h3.5v9.5z" fill="#fff" stroke="#444" stroke-width="1"/><path d="M11.5 464v9.5" stroke="#444" stroke-width="1"/><circle cx="15.8" cy="469" r="3.2" fill="#2fe088" stroke="#0e5a38" stroke-width=".8"/>
<path d="M8.5 500.5v-8h14.5v8.5" fill="none" stroke="#555" stroke-width="1.1"/><path d="M13 502.5h8" stroke="#555" stroke-width="1.1"/><circle cx="10" cy="503" r="3.5" fill="none" stroke="#333" stroke-width="1"/><circle cx="23" cy="502" r="2.2" fill="#3cc888" stroke="#0e5a38" stroke-width="1"/>
<circle cx="15.8" cy="529.7" r="2.2" fill="#3cc888" stroke="#0e5a38" stroke-width="1"/><rect x="47" y="904.2" width="16" height="15.3" fill="#f4f4f4" stroke="#8a8a8a" stroke-width="2" rx="1"/><path d="M48 919l14-14" stroke="#444" stroke-width=".8"/><circle cx="55" cy="912" r="1.7" fill="#fff" stroke="#0e5a38" stroke-width="1"/>
<path d="M77 911.5h17M85.5 903v17" stroke="#333" stroke-width="1.2" stroke-dasharray="2 1.5"/>
<circle cx="110.5" cy="904" r="1.5" fill="#3cc888" stroke="#0e5a38" stroke-width="1"/>
<circle cx="110.5" cy="909.5" r="1.5" fill="#3cc888" stroke="#0e5a38" stroke-width="1"/>
<circle cx="110.5" cy="914.5" r="1.5" fill="#3cc888" stroke="#0e5a38" stroke-width="1"/>
<circle cx="110.5" cy="920" r="1.5" fill="#3cc888" stroke="#0e5a38" stroke-width="1"/>
<circle cx="117" cy="904" r="1.5" fill="#3cc888" stroke="#0e5a38" stroke-width="1"/>
<circle cx="117" cy="909.5" r="1.5" fill="#3cc888" stroke="#0e5a38" stroke-width="1"/>
<circle cx="117" cy="914.5" r="1.5" fill="#3cc888" stroke="#0e5a38" stroke-width="1"/>
<circle cx="117" cy="920" r="1.5" fill="#3cc888" stroke="#0e5a38" stroke-width="1"/>
<circle cx="123.3" cy="904" r="1.5" fill="#3cc888" stroke="#0e5a38" stroke-width="1"/>
<circle cx="123.3" cy="909.5" r="1.5" fill="#3cc888" stroke="#0e5a38" stroke-width="1"/>
<circle cx="123.3" cy="914.5" r="1.5" fill="#3cc888" stroke="#0e5a38" stroke-width="1"/>
<circle cx="123.3" cy="920" r="1.5" fill="#3cc888" stroke="#0e5a38" stroke-width="1"/>
<path d="M144.2 903.8l12 11.7M140.2 908q8 1 11.3 10.5" fill="none" stroke="#444" stroke-width="1"/><circle cx="144.2" cy="903.8" r="1.8" fill="#3cc888" stroke="#0e5a38" stroke-width="1"/><circle cx="140.2" cy="908" r="1.8" fill="#3cc888" stroke="#0e5a38" stroke-width="1"/><circle cx="151.5" cy="918.5" r="1.8" fill="#3cc888" stroke="#0e5a38" stroke-width="1"/><circle cx="156.2" cy="915.5" r="1.8" fill="#3cc888" stroke="#0e5a38" stroke-width="1"/>
<path d="M175 903.3l12 12M170.5 909q7 1 11.5 11" fill="none" stroke="#444" stroke-width="1"/><circle cx="175" cy="903.3" r="1.8" fill="#3cc888" stroke="#0e5a38" stroke-width="1"/><circle cx="170.5" cy="909" r="1.8" fill="#3cc888" stroke="#0e5a38" stroke-width="1"/><circle cx="179" cy="907.5" r="1.8" fill="#3cc888" stroke="#0e5a38" stroke-width="1"/><circle cx="183" cy="911" r="1.8" fill="#3cc888" stroke="#0e5a38" stroke-width="1"/><circle cx="178.5" cy="912" r="1.8" fill="#3cc888" stroke="#0e5a38" stroke-width="1"/><circle cx="187" cy="915.5" r="1.8" fill="#3cc888" stroke="#0e5a38" stroke-width="1"/><circle cx="182" cy="920" r="1.8" fill="#3cc888" stroke="#0e5a38" stroke-width="1"/>
<path d="M206 901.5l14 14M201 908q10 1 12.5 13" fill="none" stroke="#333" stroke-width="1"/><circle cx="213" cy="909" r="1.8" fill="#3cc888" stroke="#0e5a38" stroke-width="1"/><circle cx="202.5" cy="919.5" r="1.8" fill="#3cc888" stroke="#0e5a38" stroke-width="1"/>
<path d="M237 901.5l14 14M232 908q10 1 12.5 13" fill="none" stroke="#333" stroke-width="1"/><circle cx="244" cy="909" r="1.8" fill="#3cc888" stroke="#0e5a38" stroke-width="1"/><circle cx="240.5" cy="912" r="1.8" fill="#3cc888" stroke="#0e5a38" stroke-width="1"/>
<path d="M268 903l14 14M263.5 910q10 1 12.5 13" fill="none" stroke="#333" stroke-width="1"/><circle cx="273" cy="908.5" r="1.8" fill="#3cc888" stroke="#0e5a38" stroke-width="1"/><circle cx="274.5" cy="917" r="1.8" fill="#3cc888" stroke="#0e5a38" stroke-width="1"/><path d="M277.5 908.5l3.5-2.5v5z" fill="#3cc888" stroke="#0e5a38" stroke-width=".8"/><path d="M269.5 917.5l-3.5-2.5v5z" fill="#3cc888" stroke="#0e5a38" stroke-width=".8"/>
<path d="M295.5 904.5l14.5 15M310 904.5l-14.5 15" stroke="#1a4a30" stroke-width="1"/><rect x="301.3" y="910.3" width="3.5" height="3.5" fill="#3cc888" stroke="#0e5a38" stroke-width="1"/>
<rect x="331" y="910" width="18" height="5" fill="#c8f4dc" opacity=".7"/><path d="M331 912.3h18" stroke="#1a4a30" stroke-width="1.2"/><circle cx="340" cy="912.3" r="1.6" fill="#3cc888" stroke="#0e5a38" stroke-width="1"/>
<rect x="368" y="903" width="5" height="18" fill="#c8f4dc" opacity=".7"/><path d="M370.4 903v18" stroke="#1a4a30" stroke-width="1.2"/><circle cx="370.4" cy="912" r="1.6" fill="#3cc888" stroke="#0e5a38" stroke-width="1"/>
<rect x="392" y="910" width="19" height="5" fill="#c8f4dc" opacity=".7"/><rect x="399" y="903" width="5" height="19" fill="#c8f4dc" opacity=".7"/><path d="M392 912.3h19M401.5 903v19" stroke="#1a4a30" stroke-width="1.2"/><path d="M401.5 910.5l1.5 1.8-1.5 1.8-1.5-1.8z" fill="#3cc888"/>
<path d="M431 915.5l6.5-5.5 4 4.5-6.5 5.5z" fill="#fff" stroke="#222" stroke-width="1"/><path d="M436.5 909.5h11M441.8 904v11.5" stroke="#1a4a30" stroke-width="1.1"/><circle cx="441.8" cy="909.5" r="2.5" fill="#3cc888" stroke="#0e5a38" stroke-width="1"/>
<path d="M461.5 906v-1.5q0-3 2.5-3t2.5 3v1.5" fill="none" stroke="#000" stroke-width="1.2"/><rect x="459.5" y="905.5" width="9" height="7.5" rx="1" fill="#000"/><path d="M464.5 919.5l6.5-5.5 4 4.5-6.5 5.5z" fill="#fff" stroke="#222" stroke-width="1"/><path d="M470 913.5h11M475.2 908v11.5" stroke="#1a4a30" stroke-width="1.1"/><circle cx="475.2" cy="913.5" r="2.5" fill="#3cc888" stroke="#0e5a38" stroke-width="1"/>
<defs><linearGradient id="mgl" x1="0" x2="1"><stop offset="0" stop-color="#10e880"/><stop offset=".45" stop-color="#40f0a0"/><stop offset="1" stop-color="#fff"/></linearGradient><linearGradient id="mgr" x1="1" x2="0"><stop offset="0" stop-color="#10e880"/><stop offset=".45" stop-color="#40f0a0"/><stop offset="1" stop-color="#fff"/></linearGradient><linearGradient id="mgt" x1="0" x2="0" y1="0" y2="1"><stop offset="0" stop-color="#10e880"/><stop offset=".45" stop-color="#40f0a0"/><stop offset="1" stop-color="#fff"/></linearGradient><linearGradient id="mgb" x1="0" x2="0" y1="1" y2="0"><stop offset="0" stop-color="#10e880"/><stop offset=".45" stop-color="#40f0a0"/><stop offset="1" stop-color="#fff"/></linearGradient></defs>
<rect x="504.5" y="904.0" width="16" height="12.5" fill="#fff" stroke="#333" stroke-width="1.2"/><rect x="505.5" y="905.0" width="6.5" height="10.5" fill="url(#mgl)"/><path d="M512.5 916.5v2.5M508.5 919.5h8" stroke="#222" stroke-width="1.3"/>
<rect x="537.0" y="905.0" width="16" height="12.5" fill="#fff" stroke="#333" stroke-width="1.2"/><rect x="545.5" y="906.0" width="6.5" height="10.5" fill="url(#mgr)"/><path d="M545.0 917.5v2.5M541.0 920.5h8" stroke="#222" stroke-width="1.3"/>
<rect x="568.0" y="905.0" width="16" height="12.5" fill="#fff" stroke="#333" stroke-width="1.2"/><rect x="569.0" y="906.0" width="14" height="5.5" fill="url(#mgt)"/><path d="M576.0 917.5v2.5M572.0 920.5h8" stroke="#222" stroke-width="1.3"/>
<rect x="598.0" y="904.0" width="16" height="12.5" fill="#fff" stroke="#333" stroke-width="1.2"/><rect x="599.0" y="910.0" width="14" height="5.5" fill="url(#mgb)"/><path d="M606.0 916.5v2.5M602.0 919.5h8" stroke="#222" stroke-width="1.3"/>
<rect x="630.0" y="905.0" width="16" height="12.5" fill="#fff" stroke="#333" stroke-width="1.2"/><rect x="634.0" y="908.5" width="6" height="4.5" fill="#1ee888" opacity=".8"/><path d="M638.0 917.5v2.5M634.0 920.5h8" stroke="#222" stroke-width="1.3"/>
<path d="M669.5 912h9M674 907.5v9" stroke="#000" stroke-width="2.6"/><rect x="680.5" y="903.5" width="9.5" height="18" fill="#f8f8f8" stroke="#999" stroke-width="1"/><path d="M682.5 907h5.5M682.5 910h5.5M682.5 913h5.5M682.5 916h5.5M682.5 919h5.5" stroke="#666" stroke-width=".8"/>
<path d="M700.5 912h9M705 907.5v9" stroke="#000" stroke-width="2.6"/><rect x="711" y="903.5" width="9.5" height="18" fill="#e4f8ec" stroke="#8aa" stroke-width="1"/><path d="M711 912.5h9.5" stroke="#8aa" stroke-width="1"/><path d="M713 910l5-4.5" stroke="#333" stroke-width=".8"/><circle cx="715.8" cy="917" r="2.6" fill="none" stroke="#444" stroke-width=".8"/>
<path d="M546.5 947.5c0-6-3.5-9.5-8.5-9.5c-5 0-9 4-10.5 10.5c-1.2 4.5-6 6.5-13.5 2.5" fill="none" stroke="#000" stroke-width="1.8"/><path d="M531 990v-38q0-4.5 4.5-4.5h21.5q4.5 0 4.5 4.5v38" fill="#fff" stroke="#000" stroke-width="2"/><rect x="542" y="948.5" width="9" height="15" fill="#12ee80"/><path d="M541.5 948v16M551 948v16M531 963.8h30.5" stroke="#000" stroke-width="1.8"/>
<path d="M1537.7 311.8q6-5.5 12 0q-6 5.5-12 0z" fill="#3cc888" stroke="#000" stroke-width="1.3"/><circle cx="1543.7" cy="311.8" r="1.8" fill="#000"/>
<path d="M1572 311.8q6-5.5 12 0q-6 5.5-12 0z" fill="#aaa" stroke="#8a8a8a" stroke-width="1.3"/><circle cx="1578" cy="311.8" r="1.8" fill="#8a8a8a"/>
<rect x="1538" y="343" width="12" height="6" rx="1" fill="#40e098" stroke="#20b070" stroke-width=".8"/>
<path d="M1572.5 347l5-5.5 4.5 4-5 5.5-3 .5z" fill="#40e098" stroke="#0e5a38" stroke-width="1"/><path d="M1578 344.5l5 5" stroke="#444" stroke-width="1.5"/><path d="M1573 350q1 2 3 1.5" fill="none" stroke="#0e5a38" stroke-width=".8"/>
<rect x="1557.5" y="372.5" width="9.5" height="9.5" fill="none" stroke="#555" stroke-width="1"/><circle cx="1557.5" cy="382" r="1" fill="#fff" stroke="#2a8a60" stroke-width=".8"/><circle cx="1567" cy="372.5" r="1" fill="#fff" stroke="#2a8a60" stroke-width=".8"/>
<path d="M1577.5 376.8q6-5.5 12 0q-6 5.5-12 0z" fill="#3cc888" stroke="#000" stroke-width="1.3"/><circle cx="1583.5" cy="376.8" r="1.8" fill="#000"/>
</svg>
<div class="t" style="left:31.5px;top:51.68px;font-size:11px;line-height:11px;color:#000;">By Layer</div>
<div class="t" style="left:146.5px;top:51.68px;font-size:11px;line-height:11px;color:#000;">By Layer</div>
<div class="t" style="left:248.5px;top:51.68px;font-size:11px;line-height:11px;color:#000;">By Layer</div>
<div class="t" style="left:517px;top:51.68px;font-size:11px;line-height:11px;color:#000;">Distance:</div>
<div class="t" style="left:573px;top:51.68px;font-size:11px;line-height:11px;color:#000;">1.0</div>
<div class="t" style="left:674px;top:50.68px;font-size:11px;line-height:11px;color:#000;">Close</div>
<div class="t" style="left:713.5px;top:50.68px;font-size:11px;line-height:11px;color:#000;">Undo</div>
<div class="t" style="left:752.5px;top:50.68px;font-size:11px;line-height:11px;color:#000;">Redo</div>
<div class="t" style="left:16.5px;top:905.94px;font-size:13px;line-height:13px;color:#000;">Ex</div>
<div class="t" style="left:4px;top:942.06px;font-size:12px;line-height:12px;color:#000;transform:scaleX(0.905);transform-origin:left top;">214.1270 , 59.2790</div>
<div class="t" style="left:4px;top:970.56px;font-size:12px;line-height:12px;color:#000;transform:scaleX(0.955);transform-origin:left top;">222.1809 &lt; 15.4742°</div>
<div class="t" style="left:196px;top:942.06px;font-size:12px;line-height:12px;color:#000;transform:scaleX(0.9);transform-origin:left top;">@ &nbsp;0.6270 , 0.7790</div>
<div class="t" style="left:196px;top:970.56px;font-size:12px;line-height:12px;color:#000;transform:scaleX(0.935);transform-origin:left top;">@ &nbsp;1.0000 &lt; 51.1713°</div>
<div class="t" style="right:1093px;top:934.06px;font-size:12px;line-height:12px;color:#000;transform:scaleX(0.99);transform-origin:right top;">Specify next point or</div>
<div class="t" style="right:1093px;top:948.56px;font-size:12px;line-height:12px;color:#000;transform:scaleX(1.07);transform-origin:right top;">[close/undo]</div>
<div class="t" style="left:573px;top:934.56px;font-size:12px;line-height:12px;color:#000;transform:scaleX(0.95);transform-origin:left top;">Back</div>
<div class="t" style="left:693px;top:942.56px;font-size:12px;line-height:12px;color:#000;transform:scaleX(0.95);transform-origin:left top;">Selected</div>
<div class="t" style="left:693px;top:968.56px;font-size:12px;line-height:12px;color:#000;">0</div>
<div class="t" style="left:813.5px;top:942.56px;font-size:12px;line-height:12px;color:#000;">Total Length</div>
<div class="t" style="left:813px;top:968.56px;font-size:12px;line-height:12px;color:#000;">0</div>
<div class="t" style="left:938px;top:942.06px;font-size:12px;line-height:12px;color:#000;transform:scaleX(0.96);transform-origin:left top;">Current Layer</div>
<div class="t" style="left:938px;top:970.56px;font-size:12px;line-height:12px;color:#000;">0</div>
<div class="t" style="left:1402px;top:942.06px;font-size:12px;line-height:12px;color:#000;transform:scaleX(0.94);transform-origin:left top;">Grid Status</div>
<div class="t" style="left:1402px;top:970.56px;font-size:12px;line-height:12px;color:#000;transform:scaleX(0.94);transform-origin:left top;">10 / 100</div>
<div class="t" style="left:1532px;top:78.5px;font-size:12.5px;line-height:12.5px;color:#000;transform:scaleX(0.91);transform-origin:left top;">Pen Wizard</div>
<div class="t" style="left:1532px;top:245.7px;font-size:12.5px;line-height:12.5px;color:#000;transform:scaleX(0.915);transform-origin:left top;">Layer Tree</div>
<div class="t" style="left:1532.5px;top:273.68px;font-size:11px;line-height:11px;color:#8a8a8a;">Filter</div>
<div class="t" style="left:1539px;top:587.02px;font-size:11.5px;line-height:11.5px;color:#000;transform:scaleX(0.9);transform-origin:left top;">Library Browser</div>
<div class="t" style="left:1555px;top:614.88px;font-size:11px;line-height:11px;color:#000;">No Entity selected</div>
<div class="t" style="left:1555px;top:627.88px;font-size:11px;line-height:11px;color:#000;">No Entity selected</div>
<div class="t" style="left:1555px;top:640.88px;font-size:11px;line-height:11px;color:#000;">Entity m</div>
<div class="t" style="left:1555px;top:653.88px;font-size:11px;line-height:11px;color:#000;">Entity m</div>
<div class="t" style="left:1550.3px;top:852.78px;font-size:11px;line-height:11px;color:#000;">Specify next point</div>
</body></html>
